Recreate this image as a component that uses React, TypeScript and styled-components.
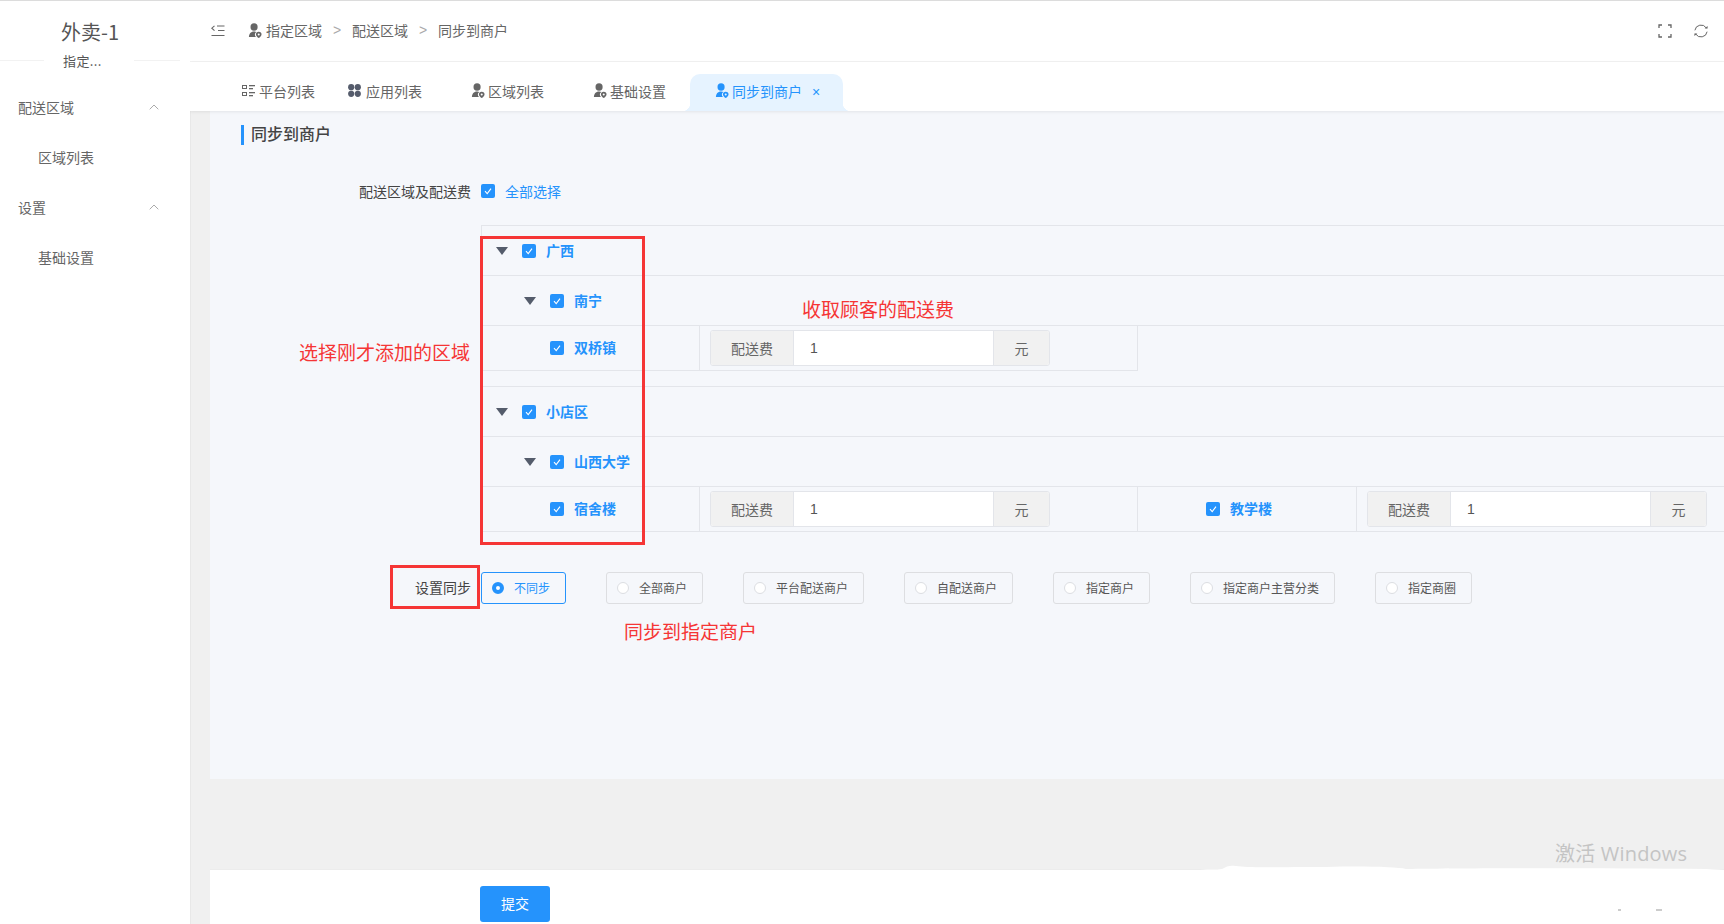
import React from "react";
import styled, { createGlobalStyle } from "styled-components";

const Global = createGlobalStyle`
  html, body { margin: 0; padding: 0; background: #fff; }
  body { font-family: "Noto Sans CJK SC", "Liberation Sans", sans-serif; font-size: 14px; color: #666; }
  * { box-sizing: border-box; }
`;

const BLUE = "#2593fc";

const Page = styled.div`
  position: relative;
  width: 1724px;
  height: 924px;
  overflow: hidden;
  display: flex;
  flex-direction: column;
  background: #fff;
`;
const TopLine = styled.div`height: 1px; background: #dcdcdc; flex: none;`;
const Body = styled.div`display: flex; flex: 1; min-height: 0;`;

const Sidebar = styled.aside`
  width: 190px;
  flex: none;
  background: #fff;
  position: relative;
  z-index: 2;
`;
const Brand = styled.div`
  height: 60px;
  margin-right: 10px;
  border-bottom: 1px solid #f2f2f2;
  position: relative;
  text-align: center;
`;
const BrandTitle = styled.div`
  padding-top: 16px;
  font-size: 20px;
  line-height: 30px;
  color: #555;
`;
const BrandSub = styled.div`
  position: absolute;
  left: 44px;
  top: 50px;
  width: 90px;
  height: 20px;
  padding-left: 19px;
  line-height: 20px;
  font-size: 13px;
  letter-spacing: .4px;
  color: #555;
  background: #fff;
  text-align: left;
`;
const MenuList = styled.nav`padding-top: 21px;`;
const MenuGroup = styled.div`
  height: 50px;
  display: flex;
  align-items: center;
  justify-content: space-between;
  padding: 0 31px 0 18px;
  font-size: 14px;
  color: #666;
`;
const MenuItem = styled.div`
  height: 50px;
  display: flex;
  align-items: center;
  padding-left: 38px;
  font-size: 14px;
  color: #666;
`;

const Main = styled.div`
  flex: 1;
  min-width: 0;
  display: flex;
  flex-direction: column;
  background: #f0f0f0;
  box-shadow: inset 1px 0 0 #e8e8e8;
`;
const Header = styled.header`
  height: 61px;
  flex: none;
  background: #fff;
  border-bottom: 1px solid #f2f2f2;
  display: flex;
  align-items: center;
  padding: 0 16px 0 21px;
`;
const CollapseBtn = styled.span`display: inline-flex; width: 37px; color: #666;`;
const Crumbs = styled.div`display: flex; align-items: center; flex: 1; color: #666; font-size: 14px; padding-bottom: 2px;`;
const CrumbSep = styled.span`width: 30px; text-align: center; color: #aaa; font-size: 14px; font-family: "Liberation Sans", sans-serif;`;
const CrumbFirst = styled.span`display: inline-flex; align-items: center; gap: 4px;`;
const HeaderTools = styled.div`display: flex; align-items: center; gap: 22px; color: #666;`;

const TabBar = styled.div`
  height: 49px;
  flex: none;
  background: #fff;
  display: flex;
  align-items: flex-end;
  padding-left: 52px;
  position: relative;
  box-shadow: 0 1px 3px rgba(0,0,0,.08);
  z-index: 1;
`;
const Tab = styled.div<{ $w: number; $gap?: number }>`
  width: ${(p) => p.$w}px;
  height: 37px;
  display: flex;
  align-items: center;
  gap: ${(p) => p.$gap ?? 5}px;
  padding-bottom: 4px;
  font-size: 14px;
  color: #666;
`;
const ActiveTab = styled(Tab)`
  position: relative;
  padding-left: 25px;
  color: ${BLUE};
  background: #e6f3ff;
  border-radius: 10px 10px 0 0;
  &::before, &::after {
    content: "";
    position: absolute;
    bottom: 0;
    width: 8px;
    height: 8px;
  }
  &::before { left: -8px; background: radial-gradient(circle at 0 0, transparent 8px, #e6f3ff 8.5px); }
  &::after { right: -8px; background: radial-gradient(circle at 100% 0, transparent 8px, #e6f3ff 8.5px); }
`;
const TabClose = styled.span`
  font-family: "Liberation Sans", sans-serif;
  font-size: 14px;
  margin-left: 7px;
  color: ${BLUE};
  position: relative;
  top: 1px;
`;

const Content = styled.main`
  flex: 1;
  min-height: 0;
  padding-left: 20px;
  display: flex;
  flex-direction: column;
`;
const Card = styled.section`
  height: 668px;
  flex: none;
  background: #f5f7fb;
  padding: 14px 0 0 0;
`;
const SectionTitle = styled.h2`
  margin: 0 0 0 31px;
  height: 20px;
  padding-left: 7px;
  border-left: 3px solid ${BLUE};
  font-size: 16px;
  line-height: 17px;
  font-weight: 500;
  color: #444;
`;
const FormRow = styled.div<{ $top: number }>`
  display: flex;
  align-items: center;
  margin-top: ${(p) => p.$top}px;
`;
const Label = styled.div<{ $lift?: number }>`
  width: 261px;
  flex: none;
  text-align: right;
  font-size: 14px;
  line-height: 20px;
  color: #444;
  padding-bottom: ${(p) => p.$lift ?? 0}px;
`;
const Check = styled.span`
  width: 14px;
  height: 14px;
  flex: none;
  border-radius: 2px;
  background: ${BLUE};
  display: inline-flex;
  align-items: center;
  justify-content: center;
`;
const CheckAll = styled.span`
  margin-left: 10px;
  display: inline-flex;
  align-items: center;
  gap: 10px;
  color: ${BLUE};
  font-size: 14px;
  line-height: 20px;
`;
const TreeWrap = styled.div`margin: 24px 0 0 271px;`;
const TreeGroup = styled.div`
  border-top: 1px solid #e3e5ea;
  border-left: 1px solid #e3e5ea;
  & + & { margin-top: 15px; }
`;
const TreeRow = styled.div<{ $h: number; $w?: number }>`
  height: ${(p) => p.$h}px;
  width: ${(p) => (p.$w ? `${p.$w}px` : "auto")};
  display: flex;
  border-bottom: 1px solid #e3e5ea;
`;
const TreeCell = styled.div<{ $w: number; $indent?: number }>`
  width: ${(p) => p.$w}px;
  flex: none;
  display: flex;
  align-items: center;
  padding-left: ${(p) => p.$indent ?? 0}px;
`;
const LeafCell = styled(TreeCell)`
  border-right: 1px solid #e3e5ea;
`;
const FeeCell = styled.div<{ $w: number; $end?: boolean }>`
  width: ${(p) => p.$w}px;
  flex: none;
  padding: 4px 0 0 10px;
  border-right: ${(p) => (p.$end ? "1px solid #e3e5ea" : "none")};
`;
const Caret = styled.span`
  width: 0;
  height: 0;
  border-left: 6px solid transparent;
  border-right: 6px solid transparent;
  border-top: 8px solid #545c6b;
  margin-right: 14px;
`;
const NodeLabel = styled.span`
  margin-left: 10px;
  padding-bottom: 2px;
  color: ${BLUE};
  font-weight: 700;
  font-size: 14px;
  line-height: 20px;
`;
const InputGroup = styled.div`
  display: flex;
  width: 340px;
  height: 36px;
  border: 1px solid #e3e5ea;
  border-radius: 3px;
  overflow: hidden;
  background: #fff;
`;
const Addon = styled.div<{ $w: number }>`
  width: ${(p) => p.$w}px;
  flex: none;
  background: #f1f1f1;
  display: flex;
  align-items: center;
  justify-content: center;
  font-size: 14px;
  color: #666;
`;
const FakeInput = styled.div`
  flex: 1;
  background: #fff;
  border-left: 1px solid #e3e5ea;
  border-right: 1px solid #e3e5ea;
  padding-left: 16px;
  display: flex;
  align-items: center;
  font-size: 14px;
  color: #555;
  font-family: "Liberation Sans", sans-serif;
`;
const RadioRow = styled.div`
  display: flex;
  align-items: center;
  margin-top: 40px;
`;
const RadioGroup = styled.div`
  display: flex;
  gap: 40px;
  margin-left: 10px;
`;
const RadioBtn = styled.div<{ $active?: boolean }>`
  height: 32px;
  display: flex;
  align-items: center;
  gap: 10px;
  padding: 0 15px 2px 10px;
  border: 1px solid ${(p) => (p.$active ? BLUE : "#dddee1")};
  border-radius: 3px;
  font-size: 12px;
  color: ${(p) => (p.$active ? BLUE : "#555")};
`;
const RadioDot = styled.span<{ $active?: boolean }>`
  width: 12px;
  height: 12px;
  margin-bottom: -2px;
  border-radius: 50%;
  background: #fff;
  border: ${(p) => (p.$active ? `4px solid ${BLUE}` : "1px solid #dcdee2")};
`;
const Footer = styled.footer`
  margin-top: 91px;
  flex: 1;
  background: #fff;
  padding: 16px 0 0 270px;
  box-shadow: 0 -1px 0 #ececec;
`;
const Submit = styled.button`
  width: 70px;
  height: 36px;
  border: none;
  border-radius: 3px;
  background: ${BLUE};
  color: #fff;
  font-family: inherit;
  font-size: 14px;
  padding: 0 0 2px 0;
`;
const RedBox = styled.div<{ $x: number; $y: number; $w: number; $h: number }>`
  position: absolute;
  left: ${(p) => p.$x}px;
  top: ${(p) => p.$y}px;
  width: ${(p) => p.$w}px;
  height: ${(p) => p.$h}px;
  border: 3px solid #f53535;
  z-index: 5;
`;
const Note = styled.div<{ $x: number; $y: number }>`
  position: absolute;
  left: ${(p) => p.$x}px;
  top: ${(p) => p.$y}px;
  font-size: 19px;
  line-height: 26px;
  color: #f53535;
  white-space: nowrap;
  z-index: 5;
`;
const Watermark = styled.div`
  position: absolute;
  left: 1555px;
  top: 840px;
  font-family: "Open Sans", "Noto Sans CJK SC", sans-serif;
  font-size: 20px;
  line-height: 28px;
  letter-spacing: .2px;
  color: #c4c4c4;
  white-space: nowrap;
  z-index: 6;
`;
const Erase = styled.svg`
  position: absolute;
  left: 1200px;
  top: 860px;
  z-index: 5;
`;

const CheckMark = () => (
  <svg width="10" height="10" viewBox="0 0 10 10"><path d="M2 5.2 4.2 7.6 8 2.6" fill="none" stroke="#fff" strokeWidth="1.1" /></svg>
);
const UserPin = () => (
  <svg width="14" height="15" viewBox="0 0 15 16" fill="currentColor" style={{ flex: "none" }}>
    <ellipse cx="6.5" cy="4.2" rx="3.8" ry="4" />
    <path d="M1 15c0-3.4 2-6 5.500-6 1 0 1.800.2 2.500.6-1.400.9-2 2.400-1.400 3.900l.9 1.500z" />
    <path fillRule="evenodd" d="M11.500 9.300a3 3 0 0 1 3 3c0 1.600-1.800 3.200-3 3.700-1.200-.5-3-2.100-3-3.700a3 3 0 0 1 3-3zm0 1.900a1.100 1.100 0 1 0 0 2.200 1.100 1.100 0 0 0 0-2.200z" />
  </svg>
);
const ListIcon = () => (
  <svg width="13" height="13" viewBox="0 0 13 13" fill="currentColor" style={{ flex: "none" }}>
    <path fillRule="evenodd" d="M0 1h5v4H0zm1 1v2h3V2z" />
    <rect x="7" y="1" width="6" height="1.300" /><rect x="7" y="4" width="4" height="1.300" />
    <path fillRule="evenodd" d="M0 8h5v4H0zm1 1v2h3V9z" />
    <rect x="7" y="8" width="6" height="1.300" /><rect x="7" y="11" width="4" height="1.300" />
  </svg>
);
const AppsIcon = () => (
  <svg width="13" height="13" viewBox="0 0 13 13" fill="#555c6c" style={{ flex: "none" }}>
    <circle cx="3.200" cy="3.200" r="3.100" /><circle cx="9.800" cy="3.200" r="3.100" />
    <circle cx="3.200" cy="9.800" r="3.100" /><circle cx="9.800" cy="9.800" r="3.100" />
  </svg>
);
const ChevronUp = () => (
  <svg width="10" height="6" viewBox="0 0 10 6"><path d="M.7 5.300 5 1l4.300 4.300" fill="none" stroke="#aaa" strokeWidth="1" /></svg>
);
const CollapseIcon = () => (
  <svg width="14" height="12" viewBox="0 0 14 12" fill="none" stroke="#666" strokeWidth="1.100">
    <path d="M3.500 .8.800 3.200l2.700 2.400" /><path d="M6 1h7.500M7 5.500h6.500M.5 10.500h13" />
  </svg>
);
const FullIcon = () => (
  <svg width="14" height="14" viewBox="0 0 14 14" fill="none" stroke="#666" strokeWidth="1.300">
    <path d="M4 1H1v3M10 1h3v3M4 13H1v-3M10 13h3v-3" />
  </svg>
);
const RefreshIcon = () => (
  <svg width="14" height="14" viewBox="0 0 14 14" fill="none" stroke="#666" strokeWidth="1">
    <path d="M.9 6.300A6.200 6.200 0 0 1 12.300 4M13.100 7.700A6.200 6.200 0 0 1 1.700 10" />
    <path d="M10.600 4.600h3V2zM3.400 9.400h-3V12z" fill="#666" stroke="none" />
  </svg>
);

function Fee() {
  return (
    <InputGroup>
      <Addon $w={82}>配送费</Addon>
      <FakeInput>1</FakeInput>
      <Addon $w={55}>元</Addon>
    </InputGroup>
  );
}

function Node({ caret, indent, text }: { caret?: boolean; indent: number; text: string }) {
  return (
    <TreeCell $w={218} $indent={indent}>
      {caret && <Caret />}
      <Check><CheckMark /></Check>
      <NodeLabel>{text}</NodeLabel>
    </TreeCell>
  );
}

const radios = ["全部商户", "平台配送商户", "自配送商户", "指定商户", "指定商户主营分类", "指定商圈"];

export default function App() {
  return (
    <Page>
      <Global />
      <TopLine />
      <Body>
        <Sidebar>
          <Brand>
            <BrandTitle>外卖-1</BrandTitle>
            <BrandSub>指定...</BrandSub>
          </Brand>
          <MenuList>
            <MenuGroup>配送区域<ChevronUp /></MenuGroup>
            <MenuItem>区域列表</MenuItem>
            <MenuGroup>设置<ChevronUp /></MenuGroup>
            <MenuItem>基础设置</MenuItem>
          </MenuList>
        </Sidebar>
        <Main>
          <Header>
            <CollapseBtn><CollapseIcon /></CollapseBtn>
            <Crumbs>
              <CrumbFirst><UserPin />指定区域</CrumbFirst>
              <CrumbSep>&gt;</CrumbSep>
              <span>配送区域</span>
              <CrumbSep>&gt;</CrumbSep>
              <span>同步到商户</span>
            </Crumbs>
            <HeaderTools><FullIcon /><RefreshIcon /></HeaderTools>
          </Header>
          <TabBar>
            <Tab $w={106} $gap={4}><ListIcon />平台列表</Tab>
            <Tab $w={123}><AppsIcon />应用列表</Tab>
            <Tab $w={122} $gap={3}><UserPin />区域列表</Tab>
            <Tab $w={97} $gap={3}><UserPin />基础设置</Tab>
            <ActiveTab $w={153} $gap={3}><UserPin />同步到商户<TabClose>×</TabClose></ActiveTab>
          </TabBar>
          <Content>
            <Card>
              <SectionTitle>同步到商户</SectionTitle>
              <FormRow $top={36}>
                <Label>配送区域及配送费</Label>
                <CheckAll><Check><CheckMark /></Check>全部选择</CheckAll>
              </FormRow>
              <TreeWrap>
                <TreeGroup>
                  <TreeRow $h={50}><Node caret indent={14} text="广西" /></TreeRow>
                  <TreeRow $h={50}><Node caret indent={42} text="南宁" /></TreeRow>
                  <TreeRow $h={45} $w={656}>
                    <LeafCell $w={218} $indent={68}><Check><CheckMark /></Check><NodeLabel>双桥镇</NodeLabel></LeafCell>
                    <FeeCell $w={438} $end><Fee /></FeeCell>
                  </TreeRow>
                </TreeGroup>
                <TreeGroup>
                  <TreeRow $h={50}><Node caret indent={14} text="小店区" /></TreeRow>
                  <TreeRow $h={50}><Node caret indent={42} text="山西大学" /></TreeRow>
                  <TreeRow $h={45}>
                    <LeafCell $w={218} $indent={68}><Check><CheckMark /></Check><NodeLabel>宿舍楼</NodeLabel></LeafCell>
                    <FeeCell $w={438} $end><Fee /></FeeCell>
                    <LeafCell $w={219} $indent={68}><Check><CheckMark /></Check><NodeLabel>教学楼</NodeLabel></LeafCell>
                    <FeeCell $w={350}><Fee /></FeeCell>
                  </TreeRow>
                </TreeGroup>
              </TreeWrap>
              <RadioRow>
                <Label $lift={3}>设置同步</Label>
                <RadioGroup>
                  <RadioBtn $active><RadioDot $active />不同步</RadioBtn>
                  {radios.map((r) => (
                    <RadioBtn key={r}><RadioDot />{r}</RadioBtn>
                  ))}
                </RadioGroup>
              </RadioRow>
            </Card>
            <Footer><Submit>提交</Submit></Footer>
          </Content>
        </Main>
      </Body>
      <RedBox $x={480} $y={236} $w={165} $h={309} />
      <RedBox $x={390} $y={565} $w={90} $h={44} />
      <Note $x={299} $y={339}>选择刚才添加的区域</Note>
      <Note $x={802} $y={296}>收取顾客的配送费</Note>
      <Note $x={624} $y={618}>同步到指定商户</Note>
      <Watermark>激活 Windows</Watermark>
      <Erase width="524" height="64" viewBox="0 0 524 64">
        <path d="M0 10c10-1 15 0 22-1 5-3 8-4 14-3 12 2 40 1 90 1 40-1 70 0 80 2 60-1 200-1 300 0l18 1v54H0z" fill="#fff" />
        <path d="M418 50h3M456 50h6" stroke="#999" strokeWidth="1" />
      </Erase>
    </Page>
  );
}
